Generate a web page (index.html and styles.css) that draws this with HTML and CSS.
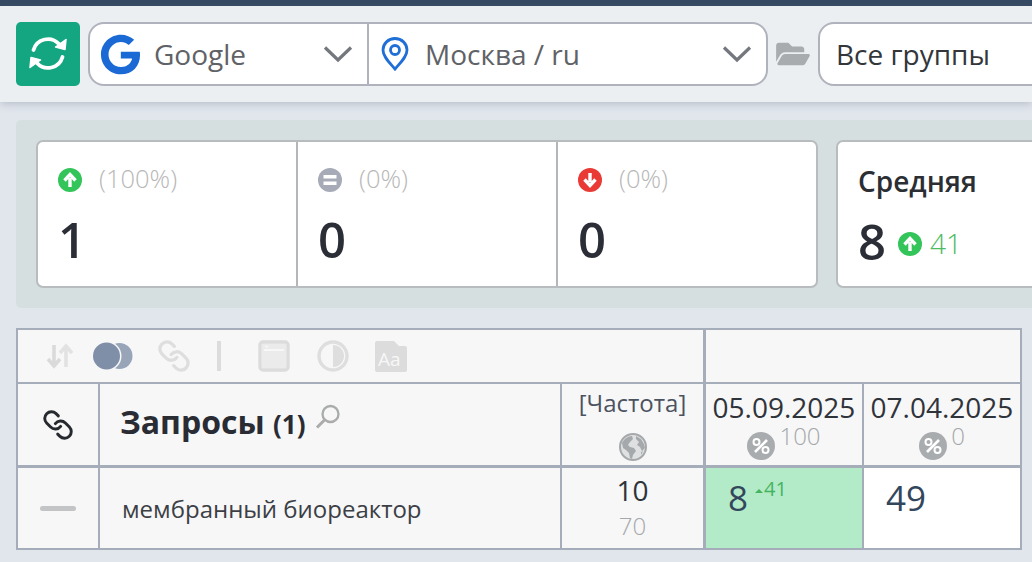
FILE: index.html
```html
<!DOCTYPE html>
<html lang="ru">
<head>
<meta charset="utf-8">
<title>Позиции</title>
<link rel="stylesheet" href="styles.css">
</head>
<body>
<div class="topline"></div>
<header class="toolbar">
  <button class="refresh" aria-label="Обновить">
    <svg width="64" height="64" viewBox="0 0 64 64" fill="none" stroke="#fff" stroke-width="3.800" stroke-linecap="round">
      <path d="M17.500 28A15 15 0 0 1 43 22"/>
      <path d="M46.500 35A15 15 0 0 1 21 41"/>
      <path d="M50 17.500 49 27.500 39.500 25z" fill="#fff" stroke-width="1.500" stroke-linejoin="round"/>
      <path d="M14 45.500 15 35.500 24.500 38z" fill="#fff" stroke-width="1.500" stroke-linejoin="round"/>
    </svg>
  </button>
  <div class="selects">
    <div class="sel sel-engine">
      <svg class="g-logo" width="41" height="41" viewBox="0 0 488 512"><path fill="#1a69d4" d="M488 261.800C488 403.300 391.100 504 248 504 110.800 504 0 393.200 0 256S110.800 8 248 8c66.800 0 123 24.500 166.300 64.900l-67.500 64.900C258.500 52.600 94.300 116.600 94.300 256c0 86.500 69.100 156.600 153.700 156.600 98.200 0 135-70.400 140.800-106.900H248v-85.300h236.100c2.300 12.700 3.900 24.900 3.900 41.400z"/></svg>
      <span class="sel-text">Google</span>
      <svg class="chev" width="30" height="18" viewBox="0 0 30 18" fill="none" stroke="#74777d" stroke-width="3.200"><path d="M2 2.500 15 15 28 2.500"/></svg>
    </div>
    <div class="sel sel-region">
      <svg class="pin" width="28" height="34" viewBox="0 0 28 34" fill="none" stroke="#1f6fd6" stroke-width="2.800"><path d="M14 32C9 26 2 20 2 13a12 11.500 0 0 1 24 0c0 7-7 13-12 19z"/><circle cx="14" cy="13" r="4.500"/></svg>
      <span class="sel-text">Москва / ru</span>
      <svg class="chev" width="30" height="18" viewBox="0 0 30 18" fill="none" stroke="#74777d" stroke-width="3.200"><path d="M2 2.500 15 15 28 2.500"/></svg>
    </div>
  </div>
  <svg class="folder" width="34" height="30" viewBox="0 0 576 512"><path fill="#a9acae" d="M572.694 292.093L500.270 416.248A63.997 63.997 0 0 1 444.989 448H45.025c-18.523 0-30.064-20.093-20.731-36.093l72.424-124.155A64 64 0 0 1 152 256h399.964c18.523 0 30.064 20.093 20.730 36.093zM152 224h328v-48c0-26.510-21.490-48-48-48H272l-64-64H48C21.490 64 0 85.490 0 112v278.046l69.077-118.418C86.214 242.250 117.989 224 152 224z"/></svg>
  <div class="group-select">Все группы</div>
</header>

<section class="summary">
  <div class="card card-triple">
    <div class="stat">
      <div class="stat-top">
        <svg class="dot" width="24" height="24" viewBox="0 0 24 24"><circle cx="12" cy="12" r="12" fill="#33c45a"/><path d="M12 19v-9M6.500 12.500 12 6.500l5.500 6" fill="none" stroke="#fff" stroke-width="3.400"/></svg>
        <span class="pct">(100%)</span>
      </div>
      <div class="stat-num">1</div>
    </div>
    <div class="stat">
      <div class="stat-top">
        <svg class="dot" width="24" height="24" viewBox="0 0 24 24"><circle cx="12" cy="12" r="12" fill="#a7abb7"/><path d="M5.500 8.800h13M5.500 15.200h13" fill="none" stroke="#fff" stroke-width="3.400"/></svg>
        <span class="pct">(0%)</span>
      </div>
      <div class="stat-num">0</div>
    </div>
    <div class="stat">
      <div class="stat-top">
        <svg class="dot" width="24" height="24" viewBox="0 0 24 24"><circle cx="12" cy="12" r="12" fill="#ea3a35"/><path d="M12 5v9M6.500 11.500 12 17.500l5.500-6" fill="none" stroke="#fff" stroke-width="3.400"/></svg>
        <span class="pct">(0%)</span>
      </div>
      <div class="stat-num">0</div>
    </div>
  </div>
  <div class="card card-avg">
    <div class="avg-title">Средняя</div>
    <div class="avg-row">
      <span class="stat-num">8</span>
      <svg class="dot" width="24" height="24" viewBox="0 0 24 24"><circle cx="12" cy="12" r="12" fill="#33c45a"/><path d="M12 19v-9M6.500 12.500 12 6.500l5.500 6" fill="none" stroke="#fff" stroke-width="3.400"/></svg>
      <span class="avg-delta">41</span>
    </div>
  </div>
</section>

<section class="grid">
  <div class="cell tools">
    <svg width="27" height="26" viewBox="0 0 27 26" fill="none" stroke="#dadada" stroke-width="3.600"><path d="M8 2v20M2 16l6 7 6-7"/><path d="M20 24V4M14 10l6-7 6 7" stroke="#e2e2e2"/></svg>
    <svg class="t-toggle" width="40" height="28" viewBox="0 0 40 28"><circle cx="26.500" cy="14" r="13" fill="#98a5b8"/><circle cx="13.500" cy="14" r="15" fill="#f7f7f8"/><circle cx="13.500" cy="14" r="13.500" fill="#7f8fa8"/></svg>
    <svg class="t-link" width="34" height="34" viewBox="0 0 24 24" fill="none" stroke="#dedede" stroke-width="2.300" stroke-linecap="round"><g transform="matrix(-1 0 0 1 24 0)"><path d="M10 13a5 5 0 0 0 7.540.54l3-3a5 5 0 0 0-7.070-7.070l-1.720 1.710"/><path d="M14 11a5 5 0 0 0-7.540-.54l-3 3a5 5 0 0 0 7.070 7.070l1.710-1.710"/></g></svg>
    <span class="t-sep"></span>
    <svg class="t-win" width="32" height="32" viewBox="0 0 32 32" fill="none" stroke="#dcdcdc" stroke-width="3.400"><rect x="2" y="2" width="28" height="28" rx="3"/><rect x="4" y="4" width="24" height="24" fill="#ebebeb" stroke="none"/><path d="M6 10h20" stroke="#f7f7f8" stroke-width="2"/><path d="M7 6.500h3" stroke="#f7f7f8" stroke-width="1.500"/></svg>
    <svg class="t-contrast" width="32" height="32" viewBox="0 0 32 32"><circle cx="16" cy="16" r="14" fill="none" stroke="#dedede" stroke-width="3.400"/><path d="M16 5a11 11 0 0 1 0 22z" fill="#dedede"/></svg>
    <svg class="t-font" width="33" height="32" viewBox="0 0 33 32"><path d="M1 3a2 2 0 0 1 2-2h17l5 5h6a2 2 0 0 1 2 2v22a2 2 0 0 1-2 2H3a2 2 0 0 1-2-2z" fill="#dcdcdc"/><text x="4" y="26" class="t-font-text">Aa</text></svg>
  </div>
  <div class="cell tools-right"></div>

  <div class="cell c-link">
    <svg width="32" height="32" viewBox="0 0 24 24" fill="none" stroke="#26292e" stroke-width="2.200" stroke-linecap="round"><g transform="matrix(-1 0 0 1 24 0)"><path d="M10 13a5 5 0 0 0 7.540.54l3-3a5 5 0 0 0-7.070-7.070l-1.720 1.710"/><path d="M14 11a5 5 0 0 0-7.540-.54l-3 3a5 5 0 0 0 7.070 7.070l1.710-1.710"/></g></svg>
  </div>
  <div class="cell c-query-head">
    <span class="q-title">Запросы <span class="q-count">(1)</span></span>
    <svg class="q-search" width="26" height="26" viewBox="0 0 26 26" fill="none" stroke="#a9acaa" stroke-width="2.300"><circle cx="15.500" cy="10" r="8"/><path d="M9.500 16 2 23.500" stroke-width="3"/></svg>
  </div>
  <div class="cell c-freq-head">
    <div class="freq-label">[Частота]</div>
    <svg class="globe" width="28" height="28" viewBox="0 0 28 28"><circle cx="14" cy="14" r="13" fill="#dfe0e1" stroke="#a6a9ab" stroke-width="2"/><path d="M3 10c2-4 6-7 10-7l1 3-3 3-2 3 2 2 4 1 2 3-3 4-1 4-2-1-1-5-3-3-3-2zM17 3l5 3 3 5 1 4-3 3-2-4-3-2 2-3-3-3zM22 19l2-1-2 4z" fill="#a6a9ab"/></svg>
  </div>
  <div class="cell c-date c-date-a">
    <div class="date">05.09.2025</div>
    <div class="date-sub">
      <svg class="pct-ic" width="28" height="28" viewBox="0 0 28 28"><circle cx="14" cy="14" r="14" fill="#a9acae"/><path d="M8 20 20 8" stroke="#fff" stroke-width="2.600"/><circle cx="9.500" cy="10" r="3" fill="none" stroke="#fff" stroke-width="2"/><circle cx="18.500" cy="18" r="3" fill="none" stroke="#fff" stroke-width="2"/></svg>
      <span class="date-val">100</span>
    </div>
  </div>
  <div class="cell c-date c-date-b">
    <div class="date">07.04.2025</div>
    <div class="date-sub">
      <svg class="pct-ic" width="28" height="28" viewBox="0 0 28 28"><circle cx="14" cy="14" r="14" fill="#a9acae"/><path d="M8 20 20 8" stroke="#fff" stroke-width="2.600"/><circle cx="9.500" cy="10" r="3" fill="none" stroke="#fff" stroke-width="2"/><circle cx="18.500" cy="18" r="3" fill="none" stroke="#fff" stroke-width="2"/></svg>
      <span class="date-val">0</span>
    </div>
  </div>

  <div class="cell row c-minus"><span class="minus"></span></div>
  <div class="cell row c-query">мембранный биореактор</div>
  <div class="cell row c-freq">
    <div class="freq-a">10</div>
    <div class="freq-b">70</div>
  </div>
  <div class="cell row c-pos c-pos-up">
    <span class="pos">8</span><span class="pos-delta"><span class="tri"></span>41</span>
  </div>
  <div class="cell row c-pos c-pos-plain"><span class="pos">49</span></div>
</section>
</body>
</html>
```
FILE: styles.css
```css
* { box-sizing: border-box; }
html, body { margin: 0; padding: 0; }
body {
  width: 1032px;
  height: 562px;
  overflow: hidden;
  background: #e1e6ed;
  font-family: "Open Sans", "Noto Sans", sans-serif;
  color: #2b2e33;
}
.topline { height: 6px; background: #354a63; }
.toolbar {
  height: 96px;
  display: flex;
  align-items: center;
  padding: 0 0 0 16px;
  background: #ebeff1;
  box-shadow: 0 2px 8px rgba(90, 100, 120, .3);
  width: 1032px;
  overflow: hidden;
}
.refresh {
  width: 64px;
  height: 64px;
  flex: none;
  display: flex;
  align-items: center;
  justify-content: center;
  padding: 0;
  border: 0;
  border-radius: 5px;
  background: #13a680;
}
.selects {
  width: 680px;
  height: 64px;
  flex: none;
  margin-left: 8px;
  display: flex;
  background: #fff;
  border: 2px solid #b0b3bd;
  border-radius: 16px;
}
.sel { display: flex; align-items: center; position: relative; }
.sel-engine { width: 279px; padding-left: 10px; border-right: 2px solid #b0b3bd; }
.sel-region { flex: 1; padding-left: 12px; }
.sel-text { font-size: 28px; color: #5f6266; }
.g-logo { margin-right: 13px; }
.pin { margin-right: 16px; }
.chev { margin-left: auto; margin-right: 14px; }
.folder { margin: 0 8px; flex: none; }
.group-select {
  flex: none;
  width: 300px;
  height: 64px;
  padding-left: 16px;
  display: flex;
  align-items: center;
  background: #fff;
  border: 2px solid #b0b3bd;
  border-radius: 16px;
  font-size: 28px;
  color: #33363a;
}

.summary {
  margin: 18px 0 0 16px;
  height: 188px;
  width: 1100px;
  padding: 20px;
  display: flex;
  gap: 18px;
  background: #d5dfe0;
  border-radius: 5px 0 0 5px;
}
.card {
  height: 148px;
  background: #fff;
  border: 2px solid #b9bcbe;
  border-radius: 7px;
}
.card-triple { width: 782px; display: flex; flex: none; }
.stat { flex: none; width: 260px; padding: 26px 20px 0; border-right: 2px solid #b4b7b9; }
.stat:last-child { width: 258px; border-right: 0; }
.stat-top { display: flex; align-items: center; height: 24px; }
.stat-top .dot { flex: none; }
.pct { margin-left: 17px; margin-top: -4px; font-size: 25.500px; font-weight: 300; color: #b8b8b8; }
.stat-num { display: block; font-size: 49px; line-height: 60px; font-weight: 600; color: #2b2e36; }
.stat .stat-num { margin-top: 17px; }
.card-avg { width: 300px; padding: 20px 20px 0; flex: none; }
.avg-title { font-size: 28px; line-height: 38px; font-weight: 600; color: #2b2e33; }
.avg-row { display: flex; align-items: center; margin-top: 11px; height: 60px; }
.avg-row .dot { margin-left: 12px; margin-top: 6px; }
.avg-delta { margin-left: 8px; margin-top: 3px; font-size: 28px; font-weight: 300; color: #4cbb63; }

.grid {
  margin: 20px 0 0 16px;
  width: 1006px;
  display: grid;
  grid-template-columns: 82px 462px 144px 158px 158px;
  grid-template-rows: 54px 84px 82px;
  border-top: 2px solid #a4adb9;
  border-left: 2px solid #a4adb9;
}
.cell {
  background: #f7f7f8;
  border-right: 2px solid #a4adb9;
  border-bottom: 2px solid #a4adb9;
}
.tools {
  grid-column: 1 / span 3;
  display: flex;
  align-items: center;
  padding-left: 28px;
  border-right-width: 3px;
}
.tools-right { grid-column: 4 / span 2; }
.t-toggle { margin-left: 20px; }
.t-link { margin-left: 24px; }
.t-sep { width: 4px; height: 30px; margin-left: 26px; background: #dcdcdc; }
.t-win { margin-left: 37px; }
.t-contrast { margin-left: 27px; }
.t-font { margin-left: 25px; }
.t-font-text { font-size: 19px; fill: #f7f7f8; }

.c-link { display: flex; align-items: center; justify-content: center; border-bottom-width: 3px; }
.c-query-head { display: flex; align-items: flex-start; padding: 16px 0 0 20px; border-bottom-width: 3px; }
.q-title { font-size: 32px; font-weight: 700; line-height: 44px; color: #292c33; white-space: nowrap; }
.q-count { font-size: 26px; }
.q-search { margin: 4px 0 0 10px; }
.c-freq-head { text-align: center; padding-top: 3px; border-right-width: 3px; border-bottom-width: 3px; }
.freq-label { font-size: 24px; line-height: 32px; color: #4b5260; }
.globe { display: block; margin: 14px auto 0; }
.c-date { text-align: center; padding-top: 6px; border-bottom-width: 3px; }
.date { font-size: 28px; line-height: 34px; color: #2f333a; white-space: nowrap; }
.date-sub { display: flex; justify-content: center; align-items: flex-start; }
.pct-ic { margin-top: 8px; }
.date-val { font-size: 24px; line-height: 24px; font-weight: 300; color: #a5a8aa; margin-left: 4px; }

.row { border-bottom-width: 2px; }
.c-minus { display: flex; align-items: center; justify-content: center; }
.minus { width: 36px; height: 5px; border-radius: 3px; background: #c3c4c6; }
.c-query { display: flex; align-items: center; padding-left: 22px; font-size: 24px; color: #3c3f45; }
.c-freq { text-align: center; padding-top: 3px; border-right-width: 3px; }
.freq-a { font-size: 28px; line-height: 38px; color: #2f333a; }
.freq-b { font-size: 24px; line-height: 30px; margin-top: 2px; font-weight: 300; color: #a5a8aa; }
.c-pos { padding: 6px 0 0 22px; display: flex; align-items: flex-start; }
.c-pos-up { background: #b3eac8; }
.c-pos-plain { background: #fff; }
.pos { font-size: 35px; line-height: 48px; color: #33475c; }
.pos-delta { display: flex; align-items: center; margin: 4px 0 0 7px; font-size: 20px; line-height: 22px; font-weight: 400; color: #45b45f; }
.tri { width: 0; height: 0; margin-right: 1px; margin-top: 3px; border: 4px solid transparent; border-top: 0; border-bottom: 4px solid #45b45f; }
```
